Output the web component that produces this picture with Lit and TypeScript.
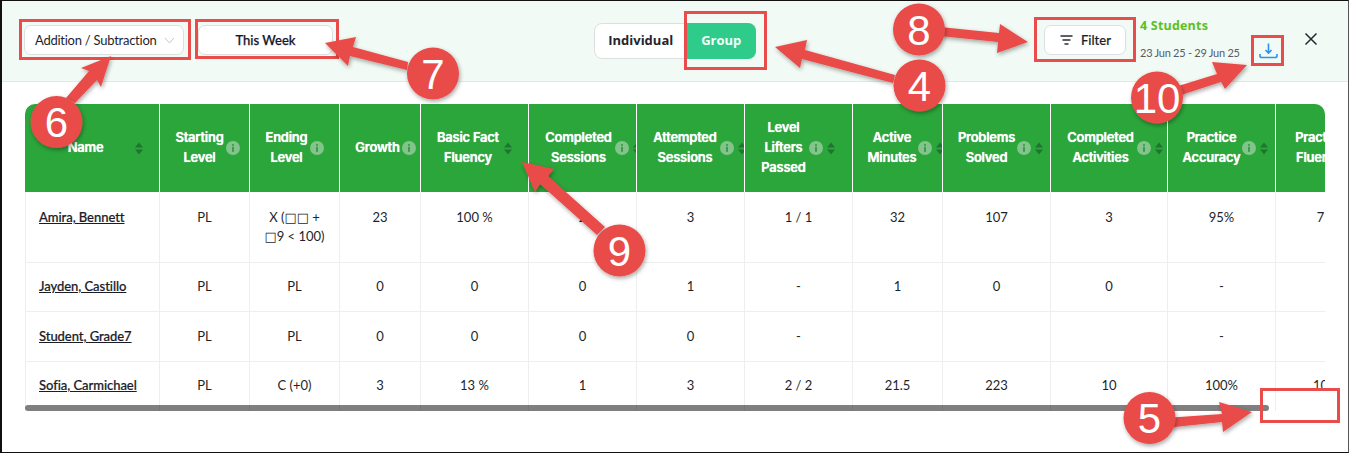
import { LitElement, html, css, svg } from "lit";
import { customElement } from "lit/decorators.js";

type Col = { w: number; lines: string[]; tw: number; info: boolean; sort: boolean };

const COLS: Col[] = [
  { w: 135, lines: ["Name"], tw: 89, info: false, sort: true },
  { w: 90, lines: ["Starting", "Level"], tw: 47, info: true, sort: false },
  { w: 90, lines: ["Ending", "Level"], tw: 41, info: true, sort: false },
  { w: 81, lines: ["Growth"], tw: 43, info: true, sort: false },
  { w: 108, lines: ["Basic Fact", "Fluency"], tw: 62, info: false, sort: true },
  { w: 108, lines: ["Completed", "Sessions"], tw: 67, info: true, sort: true },
  { w: 108, lines: ["Attempted", "Sessions"], tw: 64, info: true, sort: true },
  { w: 108, lines: ["Level", "Lifters", "Passed"], tw: 45, info: true, sort: true },
  { w: 90, lines: ["Active", "Minutes"], tw: 46, info: true, sort: true },
  { w: 108, lines: ["Problems", "Solved"], tw: 55, info: true, sort: true },
  { w: 117, lines: ["Completed", "Activities"], tw: 67, info: true, sort: true },
  { w: 108, lines: ["Practice", "Accuracy"], tw: 55, info: true, sort: true },
  { w: 108, lines: ["Practice", "Fluency"], tw: 56, info: true, sort: true },
];

const LEVEL_X = html`X (<span class="sq">\u25A1\u25A1</span> +<br /><span class="sq">\u25A1</span>9 &lt; 100)`;

const ROWS: unknown[][] = [
  ["Amira, Bennett", "PL", LEVEL_X, "23", "100 %", "2", "3", "1 / 1", "32", "107", "3", "95%", "75%"],
  ["Jayden, Castillo", "PL", "PL", "0", "0", "0", "1", "-", "1", "0", "0", "-", ""],
  ["Student, Grade7", "PL", "PL", "0", "0", "0", "0", "-", "", "", "", "-", ""],
  ["Sofia, Carmichael", "PL", "C (+0)", "3", "13 %", "1", "3", "2 / 2", "21.5", "223", "10", "100%", "100%"],
];

const BOXES = [
  [19, 19, 172, 41],
  [195, 19, 144, 40],
  [684, 11, 83, 59],
  [1034, 17, 102, 45],
  [1251, 35, 33, 31],
  [1260, 388, 80, 35],
];

const ARROWS = [
  "111,56 81,68 89,71 66,98 75,103 97,80 101,87",
  "325,43 356,37 353,47 408,62 407,70 350,56 348,66",
  "775,47 807,40 805,50 895,75 893,83 802,59 800,68",
  "1028,42 1000,24 999,33 940,27 940,36 998,42 997,53",
  "1247,65 1212,62 1217,74 1175,87 1178,96 1221,82 1225,89",
  "522,162 554,169 548,176 605,227 597,235 540,184 535,192",
  "1252,412 1219,402 1222,414 1165,418 1165,428 1222,422 1223,432",
];

const BADGES: [number, number, string][] = [
  [56.5, 122, "6"],
  [433, 73.5, "7"],
  [919, 29.5, "8"],
  [919.5, 85.5, "4"],
  [1157, 97.5, "10"],
  [619.5, 250.5, "9"],
  [1149.5, 418, "5"],
];

@customElement("app-root")
export class AppRoot extends LitElement {
  static styles = css`
    :host {
      display: block;
      position: relative;
      width: 1349px;
      height: 453px;
      overflow: hidden;
      font-family: "Lato", "Liberation Sans", sans-serif;
      color: #1d1f2c;
      background: #fff;
    }
    .frame {
      box-sizing: border-box;
      height: 453px;
      border: 1px solid #111;
      border-left-width: 2px;
      border-right-color: #555;
    }
    .top {
      box-sizing: border-box;
      height: 81px;
      background: #f1faf4;
      border-bottom: 1px solid #e4e7e5;
      display: flex;
      align-items: flex-start;
      padding: 24px 0 0 22px;
    }
    .btn {
      box-sizing: border-box;
      height: 30px;
      background: #fff;
      border: 1px solid #dcdfdd;
      border-radius: 7px;
      display: flex;
      align-items: center;
      font-size: 13px;
      line-height: 18px;
      white-space: nowrap;
    }
    .select {
      width: 160px;
      padding-left: 10px;
      gap: 7px;
      letter-spacing: -0.25px;
    }
    .week {
      width: 135px;
      margin-left: 14px;
      justify-content: center;
      font-weight: 500;
      color: #14162a;
      -webkit-text-stroke: 0.25px #14162a;
    }
    .toggle {
      box-sizing: border-box;
      margin: -2px 0 0 261px;
      width: 162px;
      height: 36px;
      display: flex;
      background: #fff;
      border: 1px solid #dcdfdd;
      border-radius: 8px;
      font-family: "Open Sans", sans-serif;
      font-weight: 700;
      font-size: 13px;
      letter-spacing: 0;
    }
    .toggle span {
      box-sizing: border-box;
      display: flex;
      align-items: center;
      justify-content: center;
      padding-bottom: 2px;
    }
    .ind {
      width: 92px;
      color: #23252f;
    }
    .grp {
      width: 70px;
      margin: -1px -1px -1px 0;
      background: #2ecb8b;
      color: #f4fffa;
      border-radius: 0 8px 8px 0;
    }
    .filter {
      width: 82px;
      margin-left: 288px;
      padding-left: 15px;
      gap: 8px;
      font-weight: 500;
      -webkit-text-stroke: 0.2px #1d1f2c;
    }
    .info {
      margin: -8px 0 0 14px;
      width: 112px;
    }
    .count {
      font-family: "Open Sans", sans-serif;
      font-weight: 700;
      font-size: 12.5px;
      line-height: 17px;
      letter-spacing: 0.2px;
      color: #5cc01e;
    }
    .dates {
      margin-top: 11px;
      font-size: 11px;
      line-height: 16px;
      letter-spacing: -0.25px;
      color: #5a5c62;
      white-space: nowrap;
    }
    .dl {
      margin: 17px 0 0 7px;
      display: block;
    }
    .close {
      margin: 7px 0 0 26px;
      display: block;
    }
    .tablewrap {
      position: relative;
      margin: 22px 0 0 23px;
      width: 1300px;
      height: 307px;
    }
    .scroller {
      width: 100%;
      height: 100%;
      overflow: hidden;
      border-radius: 10px 10px 0 0;
    }
    table {
      table-layout: fixed;
      border-collapse: separate;
      border-spacing: 0;
      width: 1358px;
    }
    th {
      box-sizing: border-box;
      height: 88px;
      padding: 0 0 0 16px;
      background: #2ba63b;
      border-right: 1px solid #fff;
      overflow: hidden;
    }
    .hcell {
      display: flex;
      align-items: center;
      width: 200px;
    }
    .htext {
      flex: none;
      display: flex;
      flex-direction: column;
      align-items: center;
      padding-bottom: 2px;
      color: #fff;
      font-family: "Inter", sans-serif;
      font-weight: 600;
      font-size: 13px;
      line-height: 20px;
      letter-spacing: -0.25px;
      white-space: nowrap;
      text-shadow: 0 0 0.8px #fff;
    }
    .iinfo {
      flex: none;
      margin-left: 3px;
      display: block;
    }
    .isort {
      flex: none;
      margin-left: 2px;
      display: block;
    }
    .noinfo {
      margin-left: 3px;
    }
    td {
      box-sizing: border-box;
      padding: 14px 4px 0;
      vertical-align: top;
      text-align: center;
      font-size: 13px;
      line-height: 19px;
      white-space: nowrap;
      border-right: 1px solid #eeeeee;
      border-bottom: 1px solid #eeeeee;
    }
    td:first-child {
      border-left: 1px solid #eeeeee;
      text-align: left;
      padding-left: 13px;
    }
    td.h1 { padding-top: 16px; }
    td.h3a { padding-top: 15px; }
    .sq {
      font-family: "DejaVu Sans", sans-serif;
    }
    .name {
      color: #1a1c28;
      font-weight: 500;
      letter-spacing: -0.05px;
      text-decoration: underline;
      white-space: nowrap;
      -webkit-text-stroke: 0.2px #1a1c28;
    }
    .h1 { height: 71px; }
    .h2 { height: 49px; }
    .h3, .h3a { height: 50px; }
    .thumb {
      position: absolute;
      left: 0;
      bottom: 0;
      width: 1244px;
      height: 6px;
      border-radius: 3px;
      background: rgba(0, 0, 0, 0.5);
    }
    .notes {
      position: absolute;
      inset: 0;
      width: 1349px;
      height: 453px;
      pointer-events: none;
    }
    .num {
      font-family: "Liberation Sans", sans-serif;
      font-size: 42px;
      fill: #fff;
      text-anchor: middle;
    }
  `;

  private header(c: Col) {
    return html`<th>
      <div class="hcell">
        <div class="htext" style="width:${c.tw}px">${c.lines.map((l) => html`<div>${l}</div>`)}</div>
        ${c.info
          ? html`<svg class="iinfo" width="14" height="14" viewBox="0 0 14 14">
              <circle cx="7" cy="7" r="7" fill="#82c48c" />
              <circle cx="7" cy="3.9" r="1" fill="#2f9a40" />
              <rect x="6.1" y="5.8" width="1.8" height="5" fill="#2f9a40" />
            </svg>`
          : ""}
        ${c.sort
          ? html`<svg class="isort ${c.info ? "" : "noinfo"}" width="12" height="13" viewBox="0 0 12 13">
              <path d="M6 0.5 L10 5.5 H2 Z M2 7.5 H10 L6 12.5 Z" fill="#1f7430" />
            </svg>`
          : ""}
      </div>
    </th>`;
  }

  private notes() {
    return html`<svg class="notes" viewBox="0 0 1349 453">
      <defs>
        <filter id="sh" x="-20%" y="-20%" width="140%" height="140%">
          <feDropShadow dx="1" dy="2" stdDeviation="2" flood-color="#000" flood-opacity="0.35" />
        </filter>
      </defs>
      ${BOXES.map(
        ([x, y, w, h]) =>
          svg`<rect x=${x + 1.5} y=${y + 1.5} width=${w - 3} height=${h - 3} fill="none" stroke="#e94c4a" stroke-width="3" />`
      )}
      ${ARROWS.map((p) => svg`<polygon points=${p} fill="#e94c4a" filter="url(#sh)" />`)}
      ${BADGES.map(
        ([x, y, t]) => svg`<circle cx=${x} cy=${y} r="26" fill="#e94c4a" filter="url(#sh)" />
          <text class="num" x=${x} y=${y + 15}>${t}</text>`
      )}
    </svg>`;
  }

  render() {
    const heights = ["h1", "h2", "h3a", "h3"];
    return html`
      <div class="frame">
        <div class="top">
          <div class="btn select">
            Addition / Subtraction
            <svg width="11" height="7" viewBox="0 0 11 7">
              <path d="M1 1 L5.5 6 L10 1" fill="none" stroke="#c4c8c6" stroke-width="1" />
            </svg>
          </div>
          <div class="btn week">This Week</div>
          <div class="toggle">
            <span class="ind">Individual</span>
            <span class="grp">Group</span>
          </div>
          <div class="btn filter">
            <svg width="13" height="10" viewBox="0 0 13 10">
              <path d="M0.5 1 H12.5 M2.5 5 H10.5 M4.5 9 H8.5" fill="none" stroke="#2a2c35" stroke-width="1.5" />
            </svg>
            Filter
          </div>
          <div class="info">
            <div class="count">4 Students</div>
            <div class="dates">23 Jun 25 - 29 Jun 25</div>
          </div>
          <svg class="dl" width="19" height="19" viewBox="0 0 19 19">
            <path
              d="M9.5 1.5 V11 M6.5 8 L9.5 11.2 L12.5 8 M1 12 V14 Q1 15.5 3 15.5 H16 Q18 15.5 18 14 V12"
              fill="none"
              stroke="#2f90ee"
              stroke-width="1.6"
            />
          </svg>
          <svg class="close" width="14" height="14" viewBox="0 0 14 14">
            <path d="M1.5 1.5 L12.5 12.5 M12.5 1.5 L1.5 12.5" fill="none" stroke="#26272e" stroke-width="1.5" />
          </svg>
        </div>
        <div class="tablewrap">
          <div class="scroller">
            <table>
              <colgroup>${COLS.map((c) => html`<col style="width:${c.w}px" />`)}</colgroup>
              <thead><tr>${COLS.map((c) => this.header(c))}</tr></thead>
              <tbody>
                ${ROWS.map(
                  (r, i) => html`<tr class=${heights[i]}>
                    ${r.map((v, j) =>
                      j === 0
                        ? html`<td class=${heights[i]}><span class="name">${v}</span></td>`
                        : html`<td class=${heights[i]}>${v}</td>`
                    )}
                  </tr>`
                )}
              </tbody>
            </table>
          </div>
          <div class="thumb"></div>
        </div>
      </div>
      ${this.notes()}
    `;
  }
}
